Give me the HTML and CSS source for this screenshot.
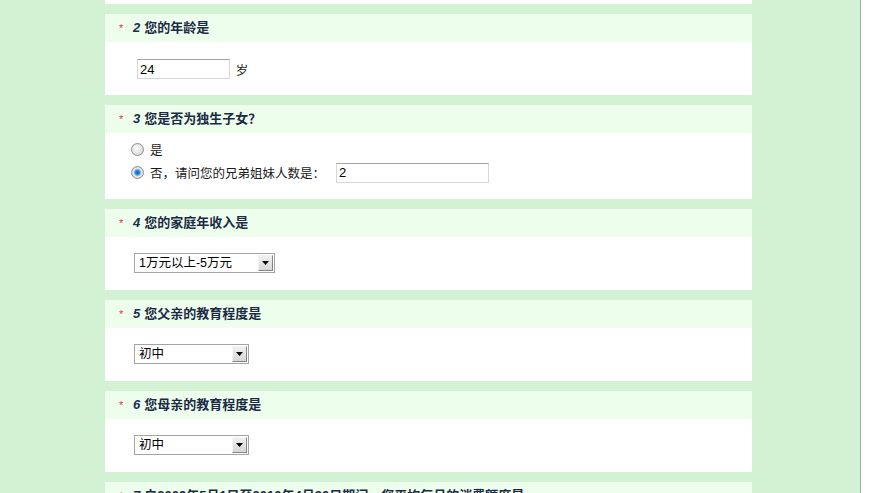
FILE: index.html
```html
<!DOCTYPE html>
<html lang="zh-CN">
<head>
    <meta charset="UTF-8">
    <title>问卷调查</title>
    <link rel="stylesheet" href="styles.css">
</head>
<body>
    <div class="page">
        <div class="survey">
            <div class="question stub"></div>

            <div class="question">
                <div class="q-title"><span class="req">*</span><span class="num">2</span>您的年龄是</div>
                <div class="q-body age">
                    <input type="text" class="text-input short" value="24"> <span class="unit">岁</span>
                </div>
            </div>

            <div class="question">
                <div class="q-title"><span class="req">*</span><span class="num">3</span>您是否为独生子女？</div>
                <div class="q-body choices">
                    <label class="choice first"><input type="radio" name="only"> 是</label>
                    <label class="choice second"><input type="radio" name="only" checked> 否，请问您的兄弟姐妹人数是：<input type="text" class="text-input long" value="2"></label>
                </div>
            </div>

            <div class="question">
                <div class="q-title"><span class="req">*</span><span class="num">4</span>您的家庭年收入是</div>
                <div class="q-body">
                    <span class="select-wrap wide">
                        <select class="dropdown">
                            <option>1万元以上-5万元</option>
                        </select>
                        <span class="drop-btn"><svg width="7" height="4" viewBox="0 0 7 4"><path d="M0 0h7L3.5 4z" fill="#000"/></svg></span>
                    </span>
                </div>
            </div>

            <div class="question">
                <div class="q-title"><span class="req">*</span><span class="num">5</span>您父亲的教育程度是</div>
                <div class="q-body">
                    <span class="select-wrap">
                        <select class="dropdown">
                            <option>初中</option>
                        </select>
                        <span class="drop-btn"><svg width="7" height="4" viewBox="0 0 7 4"><path d="M0 0h7L3.5 4z" fill="#000"/></svg></span>
                    </span>
                </div>
            </div>

            <div class="question">
                <div class="q-title"><span class="req">*</span><span class="num">6</span>您母亲的教育程度是</div>
                <div class="q-body">
                    <span class="select-wrap">
                        <select class="dropdown">
                            <option>初中</option>
                        </select>
                        <span class="drop-btn"><svg width="7" height="4" viewBox="0 0 7 4"><path d="M0 0h7L3.5 4z" fill="#000"/></svg></span>
                    </span>
                </div>
            </div>

            <div class="question">
                <div class="q-title"><span class="req">*</span><span class="num">7</span>自2009年5月1日至2010年4月30日期间，您平均每月的消费额度是</div>
                <div class="q-body"></div>
            </div>
        </div>
    </div>
</body>
</html>
```

FILE: styles.css
```css
html {
    background-color: #fff;
}
body {
    margin: 0;
    padding: 0;
    font-family: "Liberation Sans", "Noto Sans CJK SC", sans-serif;
    font-size: 13px;
    color: #1a1a1a;
    overflow: hidden;
}
.page {
    width: 860px;
    height: 493px;
    background-color: #d3f1d3;
    border-right: 1px solid #a9a9a9;
    overflow: hidden;
}
.survey {
    width: 647px;
    margin-left: 105px;
    display: flex;
    flex-direction: column;
    gap: 10px;
}
.question {
    background-color: #fff;
}
.question.stub {
    height: 4px;
}
.q-title {
    height: 28px;
    line-height: 28px;
    background-color: #edfeed;
    padding-left: 14px;
    font-family: "Liberation Sans", "Noto Sans CJK SC", sans-serif;
    font-weight: bold;
    font-size: 13px;
    color: #1c2a45;
    white-space: nowrap;
}
.req {
    display: inline-block;
    width: 14px;
    color: #e8304a;
    font-weight: normal;
    font-size: 11px;
}
.num {
    font-style: italic;
    margin-right: 4px;
    color: #1c2f55;
}
.q-body {
    height: 53px;
    padding-left: 29px;
    box-sizing: border-box;
    padding-top: 16px;
}
.q-body.age {
    padding-left: 32px;
    padding-top: 17px;
}
.unit {
    margin-left: 2px;
    font-family: "Noto Sans CJK SC", sans-serif;
    font-size: 12.5px;
    vertical-align: middle;
}
.text-input {
    height: 20px;
    box-sizing: border-box;
    border: 1px solid #d4d8de;
    border-top-color: #a5a5a5;
    padding: 0 2px;
    font-family: "Liberation Sans", sans-serif;
    font-size: 13px;
    color: #000;
    vertical-align: middle;
    margin: 0;
}
.text-input.short {
    width: 93px;
}
.text-input.long {
    width: 153px;
    margin-left: 11px;
}
.q-body.choices {
    height: 66px;
    padding: 6px 0 0 26px;
}
.choice {
    display: flex;
    align-items: center;
    font-family: "Noto Sans CJK SC", sans-serif;
    font-size: 12.5px;
    color: #1a1a1a;
    white-space: nowrap;
}
.choice.first {
    height: 20px;
}
.choice.second {
    height: 27px;
}
.choice input[type="radio"] {
    appearance: none;
    -webkit-appearance: none;
    width: 13px;
    height: 13px;
    margin: 0 6px 0 0;
    border: 1px solid #909090;
    border-radius: 50%;
    box-sizing: border-box;
    background: radial-gradient(circle at 45% 40%, #fafafa 0, #e6e6e6 50%, #c8c8c8 100%);
}
.choice input[type="radio"]:checked {
    background: radial-gradient(circle at 50% 50%, #0b5fb8 0, #2a86dc 2px, #7ec0f0 3.2px, #e4e4e4 4px, #cfcfcf 100%);
}
.select-wrap {
    position: relative;
    display: inline-block;
    width: 115px;
    height: 20px;
}
.select-wrap.wide {
    width: 141px;
}
.dropdown {
    appearance: none;
    -webkit-appearance: none;
    width: 100%;
    height: 20px;
    box-sizing: border-box;
    border: 1px solid #a4a4a4;
    border-radius: 0;
    background-color: #fff;
    padding: 0 0 0 4px;
    margin: 0;
    font-family: "Liberation Sans", "Noto Sans CJK SC", sans-serif;
    font-size: 12.5px;
    color: #000;
}
.drop-btn {
    position: absolute;
    top: 2px;
    right: 2px;
    width: 15px;
    height: 16px;
    box-sizing: border-box;
    border: 1px solid;
    border-color: #f4f4f4 #858585 #858585 #f4f4f4;
    background: linear-gradient(#f0f0f0, #d6d6d6);
    display: flex;
    align-items: center;
    justify-content: center;
}
```
